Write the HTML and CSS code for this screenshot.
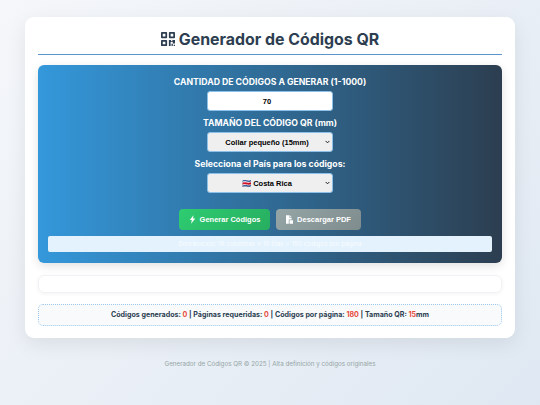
FILE: index.html
```html
<!DOCTYPE html>
<html lang="es">
<head>
  <meta charset="UTF-8">
  <title>Generador de Códigos QR</title>
  <meta name="viewport" content="width=device-width, initial-scale=1.0">
  <link rel="stylesheet" href="styles.css">
</head>
<body>
  <div class="container">
    <h1 class="title">
      <svg class="title-icon" viewBox="0 0 16 16" aria-hidden="true">
        <path fill-rule="evenodd" d="M1 0h5a1 1 0 0 1 1 1v5a1 1 0 0 1-1 1H1a1 1 0 0 1-1-1V1a1 1 0 0 1 1-1zm1 2v3h3V2zM10 0h5a1 1 0 0 1 1 1v5a1 1 0 0 1-1 1h-5a1 1 0 0 1-1-1V1a1 1 0 0 1 1-1zm1 2v3h3V2zM1 9h5a1 1 0 0 1 1 1v5a1 1 0 0 1-1 1H1a1 1 0 0 1-1-1v-5a1 1 0 0 1 1-1zm1 2v3h3v-3z"/>
        <path d="M9 9h2.500v1.500H13V9h3v4h-2.500v-1.500H11V16H9zM12 13.500h1.500V16H12zM14.500 14.500H16V16h-1.500z"/>
      </svg>
      Generador de Códigos QR
    </h1>

    <div class="panel">
      <label class="field-label" for="cantidad">CANTIDAD DE CÓDIGOS A GENERAR (1-1000)</label>
      <input class="control control-number" id="cantidad" type="text" value="70">

      <label class="field-label" for="tamano">TAMAÑO DEL CÓDIGO QR (mm)</label>
      <select class="control control-select" id="tamano">
        <option>Collar pequeño (15mm)</option>
      </select>

      <label class="field-label" for="pais">Selecciona el País para los códigos:</label>
      <select class="control control-select" id="pais">
        <option>🇨🇷 Costa Rica</option>
      </select>

      <div class="actions">
        <button class="btn btn-generate" type="button">
          <svg class="btn-icon" viewBox="0 0 10 12" aria-hidden="true"><path d="M6.500 0 1 6.800h3L3 12l6-7.300H5.800z"/></svg>
          Generar Códigos
        </button>
        <button class="btn btn-download" type="button">
          <svg class="btn-icon btn-icon-pdf" viewBox="0 0 10 12" aria-hidden="true"><path d="M0 0h5v3.500h3V6H4v6H0zM6 0l2 2.500H6zM5 7h5v5H5z"/></svg>
          Descargar PDF
        </button>
      </div>

      <div class="distribution">Distribución: 18 columnas × 10 filas = 180 códigos por página</div>
    </div>

    <div class="preview"></div>

    <div class="stats">
      Códigos generados: <span class="stat-value">0</span> | Páginas requeridas: <span class="stat-value">0</span> | Códigos por página: <span class="stat-value">180</span> | Tamaño QR: <span class="stat-value">15</span>mm
    </div>
  </div>

  <footer class="footer">Generador de Códigos QR © 2025 | Alta definición y códigos originales</footer>
</body>
</html>
```

FILE: styles.css
```css
html, body {
  height: 100%;
}
body {
  margin: 0;
  padding: 17px 25px 0;
  box-sizing: border-box;
  overflow: hidden;
  font-family: Inter, "Open Sans", sans-serif;
  background: linear-gradient(135deg, #f5f7fa, #dfe8f2);
  color: #2c3e50;
}
.container {
  background: #fff;
  border-radius: 9px;
  padding: 12px 13px;
  height: 321px;
  box-sizing: border-box;
  box-shadow: 0 6px 20px rgba(0, 0, 0, 0.08);
}
.title {
  display: flex;
  align-items: center;
  justify-content: center;
  gap: 4px;
  margin: 0 0 10px;
  padding-bottom: 5px;
  height: 20px;
  font-size: 15.900px;
  font-weight: 700;
  border-bottom: 1px solid #5b95cc;
}
.title-icon {
  width: 14px;
  height: 14px;
  fill: #2c3e50;
}
.panel {
  display: flex;
  flex-direction: column;
  align-items: center;
  height: 198px;
  box-sizing: border-box;
  padding: 11px 10px 0;
  border-radius: 6px;
  background: linear-gradient(90deg, #3498db, #2c3e50);
  box-shadow: 0 3px 10px rgba(0, 0, 0, 0.12);
}
.field-label {
  color: #fff;
  font-size: 8.700px;
  font-weight: 700;
  line-height: 12px;
  margin-bottom: 3px;
}
.control {
  width: 126px;
  height: 20px;
  box-sizing: border-box;
  margin-bottom: 6px;
  padding: 0 6px 0 0;
  border: 1px solid #8cc0e8;
  border-radius: 3px;
  background: #fff;
  color: #000;
  font-family: "Liberation Sans", sans-serif;
  font-size: 7.500px;
  font-weight: 700;
  text-align: center;
}
.control-select {
  appearance: none;
  background: #efefef url("data:image/svg+xml,%3Csvg xmlns='http://www.w3.org/2000/svg' viewBox='0 0 6 4'%3E%3Cpath d='M.7.7 3 3 5.300.7' fill='none' stroke='%23222' stroke-width='1.200'/%3E%3C/svg%3E") no-repeat right 2px center / 5px 4px;
}
.actions {
  display: flex;
  gap: 6px;
  margin-top: 10px;
}
.btn {
  display: flex;
  align-items: center;
  justify-content: center;
  gap: 4px;
  height: 21px;
  padding: 0;
  border: none;
  border-radius: 4px;
  color: #fff;
  font-family: "Liberation Sans", sans-serif;
  font-size: 7.500px;
  font-weight: 700;
}
.btn-generate {
  width: 91px;
  background: linear-gradient(135deg, #2ecc71, #27ae60);
}
.btn-download {
  width: 85px;
  background: linear-gradient(135deg, #95a5a6, #7f8c8d);
}
.btn-icon {
  width: 7px;
  height: 9px;
  fill: #fff;
}
.distribution {
  align-self: stretch;
  height: 16px;
  margin-top: 6px;
  border-radius: 2px;
  background: #e3f2fd;
  color: rgba(255, 255, 255, 0.8);
  font-size: 6.350px;
  line-height: 16px;
  text-align: center;
}
.preview {
  height: 18px;
  margin-top: 12px;
  border: 1px solid #f0f2f5;
  border-radius: 6px;
  box-sizing: border-box;
  box-shadow: 0 1px 4px rgba(0, 0, 0, 0.05);
}
.stats {
  height: 22px;
  margin-top: 11px;
  box-sizing: border-box;
  border: 1px dotted #9cc8ee;
  border-radius: 5px;
  background: #f8fafc;
  font-size: 7.100px;
  font-weight: 700;
  line-height: 20px;
  text-align: center;
}
.stat-value {
  color: #e74c3c;
}
.footer {
  margin-top: 22px;
  color: #95a5a6;
  font-size: 6.250px;
  text-align: center;
}
```
